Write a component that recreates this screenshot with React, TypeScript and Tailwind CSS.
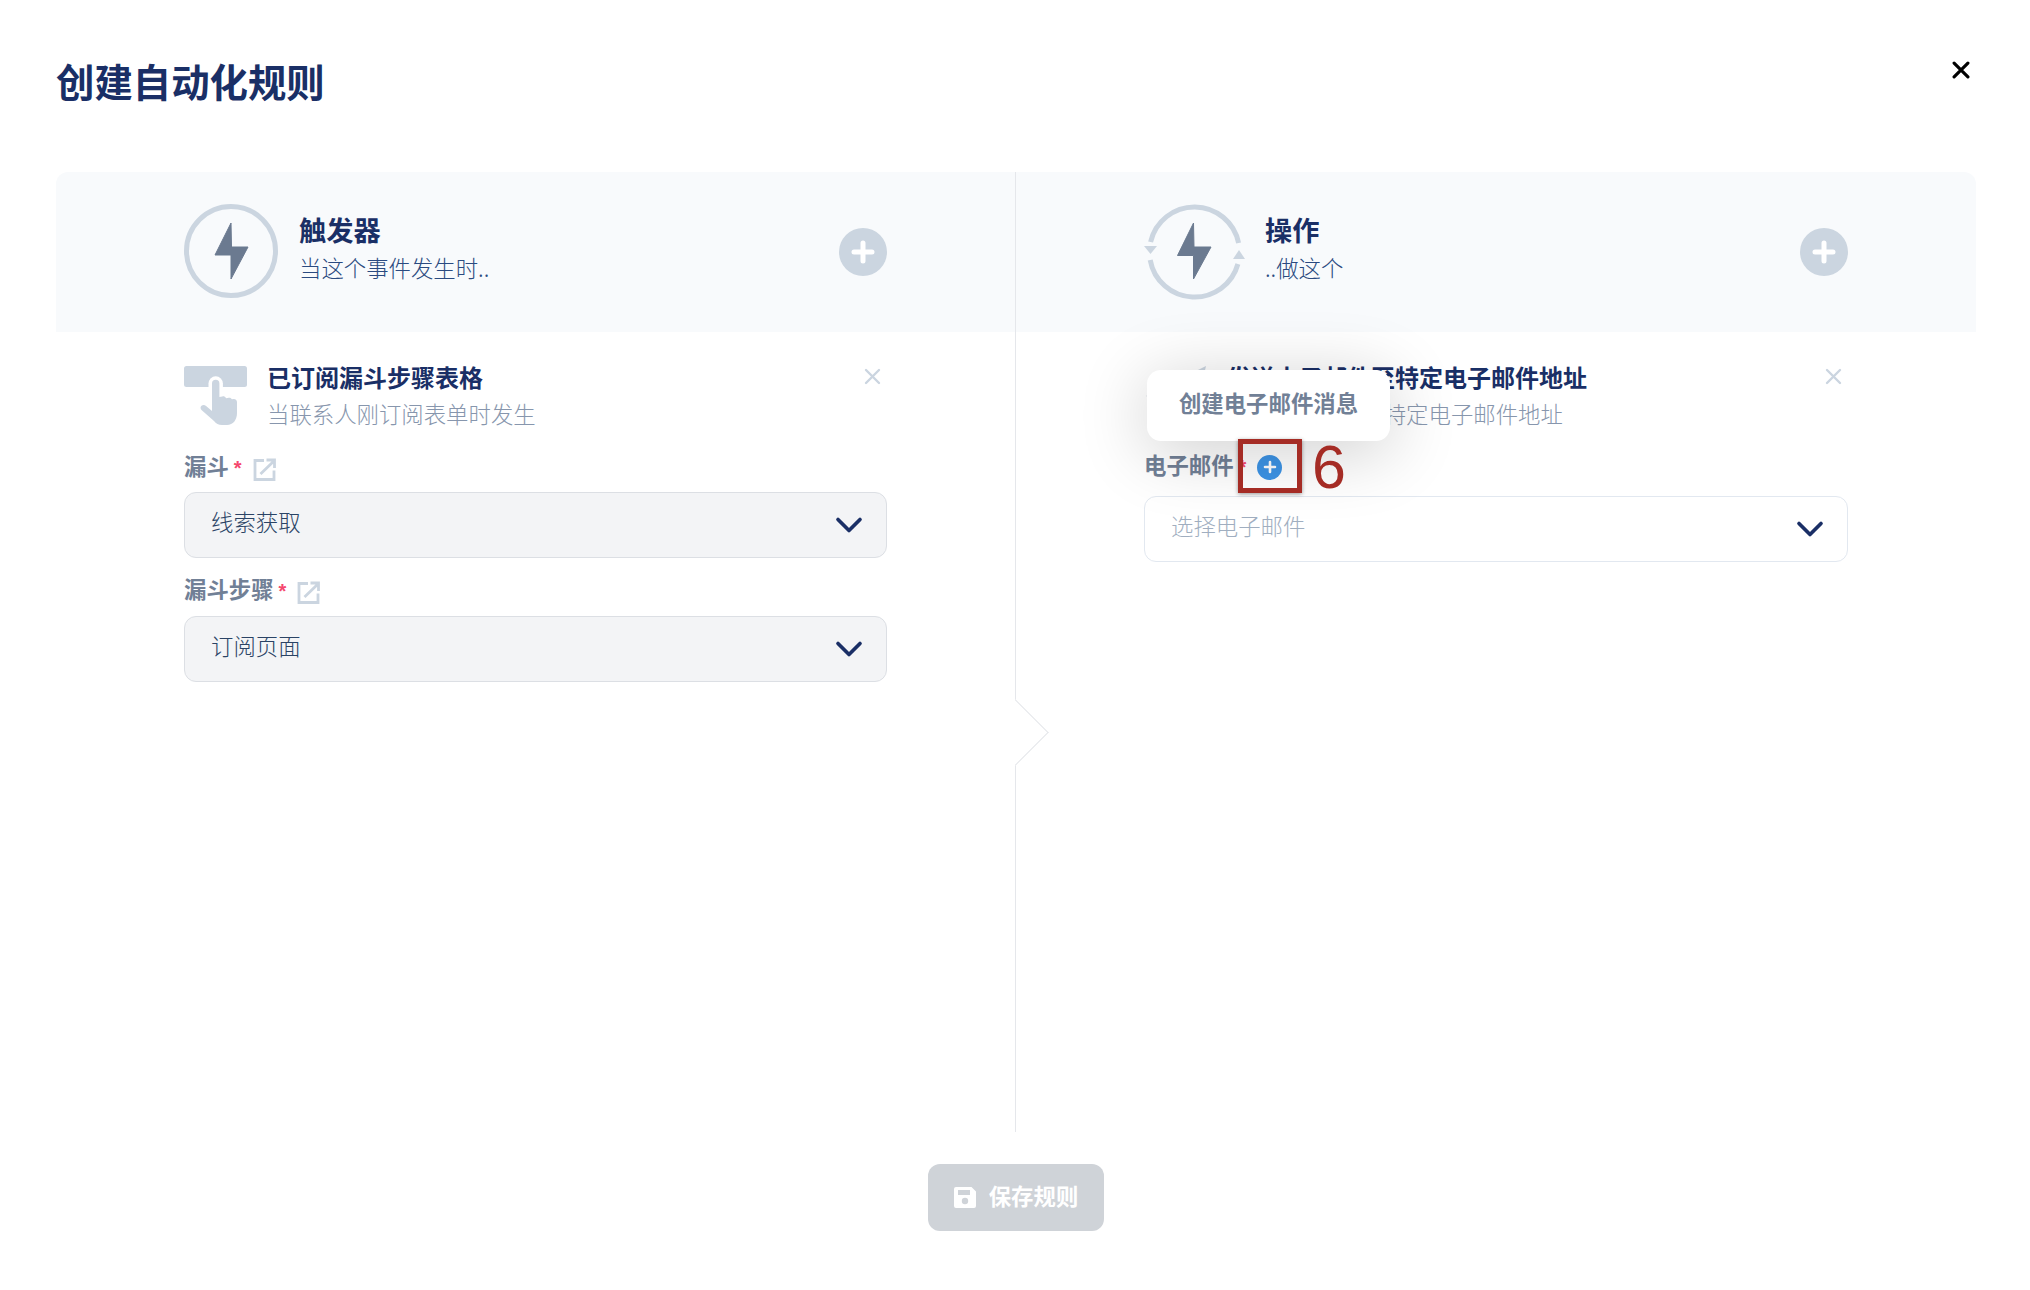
import React from 'react';
import { ChevronDown } from 'lucide-react';

function CloseIcon({ className, strokeWidth = 3 }: { className: string; strokeWidth?: number }) {
  return (
    <svg viewBox="0 0 17 17" className={className} fill="none" stroke="currentColor" strokeWidth={strokeWidth} strokeLinecap="round">
      <path d="M2 2l13 13M15 2L2 15" />
    </svg>
  );
}

function PlusCircle() {
  return (
    <div className="mt-[2px] flex h-[48px] w-[48px] shrink-0 items-center justify-center rounded-full bg-[#cbd5e0]">
      <svg viewBox="0 0 24 24" className="h-[24px] w-[24px]" fill="none" stroke="white" strokeWidth="5" strokeLinecap="round">
        <path d="M12 3v18M3 12h18" />
      </svg>
    </div>
  );
}

function ExternalIcon() {
  return (
    <svg viewBox="0 0 23 24" className="ml-[11px] mt-[3px] h-[24px] w-[23px] text-[#cbd5e0]" fill="none" stroke="currentColor" strokeWidth="2.8">
      <path d="M11 2.5H2v19h19v-9" />
      <path d="M7.5 16L21 3M13.5 2H21.5V10" />
    </svg>
  );
}

function SaveIcon() {
  return (
    <svg viewBox="0 0 22 21" className="h-[21px] w-[22px]" fill="white" fillRule="evenodd">
      <path d="M2 0h15.5L22 4.5V19a2 2 0 0 1-2 2H2a2 2 0 0 1-2-2V2a2 2 0 0 1 2-2ZM4 3v5h12V3ZM11 10.8a3.2 3.2 0 1 0 0 6.4 3.2 3.2 0 0 0 0-6.4Z" />
    </svg>
  );
}

function TriggerIcon() {
  return (
    <svg viewBox="0 0 94 94" className="h-[94px] w-[94px] shrink-0">
      <circle cx="47" cy="47" r="44.5" fill="none" stroke="#cbd5e0" strokeWidth="5" />
      <polygon points="47,19 31,51 47,51 47,75 64,43 47.5,43" fill="#6b7a90" stroke="#6b7a90" strokeLinejoin="round" />
    </svg>
  );
}

function ActionIcon() {
  return (
    <svg viewBox="0 0 102 98" className="mt-[4px] h-[98px] w-[102px] shrink-0">
      <path d="M6.6 38A45 45 0 0 1 94.6 39M93.9 60A45 45 0 0 1 6.2 56" fill="none" stroke="#cbd5e0" strokeWidth="5" />
      <polygon points="0,42 13,42 6.5,50" fill="#cbd5e0" />
      <polygon points="89,55 101,55 95,46" fill="#cbd5e0" />
      <polygon points="49.5,19 33.5,51.5 49.5,51.5 49.5,75 67,43 50,43" fill="#6b7a90" stroke="#6b7a90" strokeLinejoin="round" />
    </svg>
  );
}

function HandIcon() {
  return (
    <svg viewBox="0 0 63 59" className="h-[59px] w-[63px] shrink-0">
      <rect x="0" y="0" width="63" height="21" rx="2.5" fill="#cbd5e0" />
      <path d="M24.5 21v-3.5a7.2 7.2 0 0 1 14.4 0V21Z" fill="white" />
      <path
        d="M28 17.5a3.7 3.7 0 0 1 7.4 0V31l3-.6c1.6-.3 2.8.4 3.4 1.4l.5.4 2.4-.5c1.6-.2 2.7.5 3.2 1.6l1.8-.3c2.2 0 3.3 1.3 3.3 3.3V47c0 7-4 12-10 12h-5c-3.5 0-6-1.5-8-4L17.5 44c-1.5-1.8-1-3.5 0-4.3 1.4-1.2 3.2-.9 4.6.2L28 45Z"
        fill="#cbd5e0"
      />
    </svg>
  );
}

function PlaneIcon() {
  return (
    <svg viewBox="0 0 63 59" className="h-[59px] w-[63px] shrink-0">
      <polygon points="62,0 2,30 18,37 48,14 26,41 26,57 35,45 50,52" fill="#cbd5e0" />
    </svg>
  );
}

function SelectBox({ text, filled }: { text: string; filled?: boolean }) {
  return (
    <div
      className={`flex h-[66px] items-center justify-between rounded-xl border pl-[26px] pr-[15px] text-[22.4px] font-light ${
        filled ? 'border-[#dcdfe4] bg-[#f3f4f6] text-[#2a4365]' : 'border-[#e2e8f0] bg-white text-[#a0aec0]'
      }`}
    >
      <span className="pb-[7px]">{text}</span>
      <ChevronDown size={44} strokeWidth={2} className="text-[#1a2f66]" />
    </div>
  );
}

function PanelHead({ icon, title, sub, gap }: { icon: React.ReactNode; title: string; sub: string; gap: string }) {
  return (
    <div className="flex h-[160px] items-center pb-[2px]">
      {icon}
      <div className={`flex-1 pb-[10px] ${gap}`}>
        <div className="text-[27.2px] font-bold leading-[38px] text-[#1a2f66]">{title}</div>
        <div className="mt-[3px] text-[22.4px] font-light leading-[32px] text-[#2a4a80]">{sub}</div>
      </div>
      <PlusCircle />
    </div>
  );
}

function CardHead({ icon, title, sub }: { icon: React.ReactNode; title: string; sub: string }) {
  return (
    <div className="flex items-start">
      <div className="pt-[6px]">{icon}</div>
      <div className="ml-[20px] flex-1">
        <div className="text-[24px] font-bold leading-[34px] text-[#1a2f66]">{title}</div>
        <div className="mt-[4px] text-[22.4px] font-light leading-[30px] text-[#8796ad]">{sub}</div>
      </div>
      <CloseIcon className="mr-[6px] mt-[8px] h-[17px] w-[17px] text-[#cbd5e0]" strokeWidth={2.4} />
    </div>
  );
}

function FieldLabel({ text, children, className }: { text: string; children?: React.ReactNode; className: string }) {
  return (
    <div className={`flex h-[34px] items-center text-[22.4px] font-bold text-[#718096] ${className}`}>
      <span className="pb-[4px]">{text}</span>
      <span className="ml-[5px] h-[26px] font-['Liberation_Sans'] text-[20px] leading-[26px] text-[#f5476e]">*</span>
      {children}
    </div>
  );
}

export default function App() {
  return (
    <div className="h-[1290px] w-[2030px] overflow-hidden bg-white font-['Noto_Sans_CJK_SC','Liberation_Sans',sans-serif]">
      <div className="relative flex h-[172px] items-start px-[56px] pt-[56px]">
        <h1 className="text-[38.4px] font-bold leading-[48px] text-[#1a2f66]">创建自动化规则</h1>
        <CloseIcon className="absolute left-[1952px] top-[61px] h-[18px] w-[18px] text-black" />
      </div>

      <div className="ml-[56px] grid h-[960px] w-[1920px] grid-cols-[959px_961px]">
        <div className="flex flex-col">
          <div className="rounded-tl-xl bg-[#f8fafc] pl-[128px] pr-[128px]">
            <PanelHead icon={<TriggerIcon />} title="触发器" sub="当这个事件发生时.." gap="ml-[21px]" />
          </div>
          <div className="pl-[128px] pr-[128px] pt-[28px]">
            <CardHead icon={<HandIcon />} title="已订阅漏斗步骤表格" sub="当联系人刚订阅表单时发生" />
            <FieldLabel text="漏斗" className="mt-[23px]">
              <ExternalIcon />
            </FieldLabel>
            <div className="mt-[7px]">
              <SelectBox text="线索获取" filled />
            </div>
            <FieldLabel text="漏斗步骤" className="mt-[16px]">
              <ExternalIcon />
            </FieldLabel>
            <div className="mt-[8px]">
              <SelectBox text="订阅页面" filled />
            </div>
          </div>
        </div>

        <div className="relative flex flex-col border-l border-[#e5e7eb]">
          <div className="rounded-tr-xl bg-[#f8fafc] pl-[128px] pr-[128px]">
            <PanelHead icon={<ActionIcon />} title="操作" sub="..做这个" gap="ml-[19px]" />
          </div>
          <div className="pl-[128px] pr-[128px] pt-[28px]">
            <CardHead icon={<PlaneIcon />} title="发送电子邮件至特定电子邮件地址" sub="发送电子邮件至特定电子邮件地址" />
            <FieldLabel text="电子邮件" className="mt-[22px]">
              <div className="ml-[11px] flex h-[25px] w-[25px] items-center justify-center rounded-full bg-[#3d94e6]">
                <svg viewBox="0 0 14 14" className="h-[14px] w-[14px]" fill="none" stroke="white" strokeWidth="2.6" strokeLinecap="round">
                  <path d="M7 2v10M2 7h10" />
                </svg>
              </div>
            </FieldLabel>
            <div className="mt-[12px]">
              <SelectBox text="选择电子邮件" />
            </div>
          </div>

          <div className="absolute left-[-24px] top-[537px] h-[47px] w-[47px] rotate-45 border-r border-t border-[#e5e7eb] bg-white" />

          <div className="absolute left-[131px] top-[198px] flex h-[71px] w-[243px] items-center justify-center rounded-[14px] bg-white pb-[5px] text-[22.4px] font-bold text-[#718096] shadow-[0_10px_70px_rgba(0,0,0,0.2)]">
            创建电子邮件消息
          </div>
          <div className="absolute left-[222px] top-[267px] h-[54px] w-[64px] border-[5px] border-[#a52c25] shadow-[0_1px_4px_rgba(0,0,0,0.4)]" />
          <div className="absolute left-[296px] top-[265px] font-['Liberation_Sans'] text-[61px] leading-none text-[#a52c25]">6</div>
        </div>
      </div>

      <div className="mt-[32px] flex justify-center pl-[2px]">
        <button className="flex h-[67px] w-[176px] items-center justify-center gap-[13px] rounded-xl bg-[#cfd3d8] text-[22.4px] font-bold text-white">
          <SaveIcon />
          <span className="pb-[4px]">保存规则</span>
        </button>
      </div>
    </div>
  );
}
